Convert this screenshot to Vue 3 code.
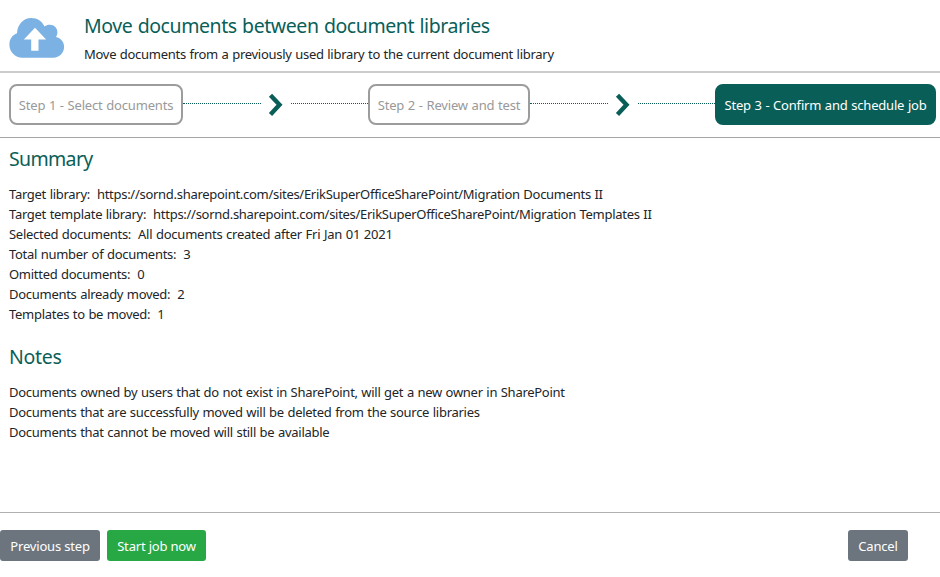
<script setup>
const steps = [
  { label: 'Step 1 - Select documents', cls: 'step-select' },
  { label: 'Step 2 - Review and test', cls: 'step-review' },
  { label: 'Step 3 - Confirm and schedule job', cls: 'step-confirm active' },
]
const summary = [
  { key: 'Target library:', value: 'https://sornd.sharepoint.com/sites/ErikSuperOfficeSharePoint/Migration Documents II', cls: 'url' },
  { key: 'Target template library:', value: 'https://sornd.sharepoint.com/sites/ErikSuperOfficeSharePoint/Migration Templates II', cls: 'url' },
  { key: 'Selected documents:', value: 'All documents created after Fri Jan 01 2021', cls: 'selection' },
  { key: 'Total number of documents:', value: '3', cls: 'total' },
  { key: 'Omitted documents:', value: '0' },
  { key: 'Documents already moved:', value: '2' },
  { key: 'Templates to be moved:', value: '1' },
]
const notes = [
  'Documents owned by users that do not exist in SharePoint, will get a new owner in SharePoint',
  'Documents that are successfully moved will be deleted from the source libraries',
  'Documents that cannot be moved will still be available',
]
</script>

<template>
  <main class="page">
    <header class="header">
      <svg class="cloud" viewBox="0 0 56 42" width="56" height="42">
        <path fill="#7bb1e3" d="M13.500 40.700C6 40.700.400 34.800.400 27.500c0-5.500 3.100-9.500 7.600-11.200C8.500 7 14.500.900 22.300.900c6 0 11 3.400 13.200 8.700 1.500-1.200 3.300-1.800 5.300-1.800 4.400 0 7.600 3.300 7.600 7.400 0 1.700-.5 3.400-1.500 4.800 4.900 1.100 8.200 4.900 8.200 9.800 0 6-4.700 10.900-10.700 10.900z" />
        <path fill="#fff" d="M26 10.800 37.200 22.400h-7.700v11.300H22.200V22.400H14.800z" />
      </svg>
      <div>
        <h1>Move documents between document libraries</h1>
        <p class="subtitle">Move documents from a previously used library to the current document library</p>
      </div>
    </header>
    <nav class="steps">
      <template v-for="(s, i) in steps" :key="s.label">
        <template v-if="i">
          <span class="dots"></span>
          <svg class="chevron" viewBox="0 0 16 24" width="16" height="24">
            <path d="M2.500 2.200 11.500 11.800 2.500 21.400" fill="none" stroke="#0a5e58" stroke-width="4.400" />
          </svg>
          <span class="dots"></span>
        </template>
        <div class="step" :class="s.cls">{{ s.label }}</div>
      </template>
    </nav>
    <section class="content">
      <h2 class="summary-title">Summary</h2>
      <ul>
        <li v-for="row in summary" :key="row.key" :class="row.cls">
          <span>{{ row.key }}</span><span class="value">{{ row.value }}</span>
        </li>
      </ul>
      <h2 class="notes-title">Notes</h2>
      <ul class="notes">
        <li v-for="n in notes" :key="n">{{ n }}</li>
      </ul>
    </section>
    <footer class="footer">
      <button class="btn previous">Previous step</button>
      <button class="btn start">Start job now</button>
      <button class="btn cancel">Cancel</button>
    </footer>
  </main>
</template>

<style>
body { margin: 0; background: #fff; }
</style>

<style scoped>
* { box-sizing: border-box; }
.page { display: flex; flex-direction: column; height: 577px; font: 13px/20px "Noto Sans", sans-serif; letter-spacing: -0.28px; word-spacing: 0.5px; color: #212529; overflow: hidden; }
h1, h2, p, ul { margin: 0; padding: 0; }
ul { list-style: none; }
h1, h2 { font-size: 19.5px; line-height: 24px; font-weight: 400; letter-spacing: -0.42px; word-spacing: 0.7px; color: #0a5e58; }
.header { display: flex; flex: none; gap: 19px; height: 73px; padding: 14px 0 0 9px; border-bottom: 2px solid #cbcecb; }
.cloud { margin-top: 3px; }
.subtitle { margin-top: 6px; }
.steps { display: flex; flex: none; align-items: center; height: 65px; padding: 0 4px 1px 9px; border-bottom: 1px solid #a5a5a5; }
.step { display: flex; align-items: center; justify-content: center; height: 41px; padding-top: 1px; border: 2px solid #9c9c9c; border-radius: 8px; color: #999; white-space: nowrap; letter-spacing: -0.18px; }
.step-select { width: 174px; }
.step-review { width: 162px; }
.step-confirm { width: 221px; letter-spacing: -0.2px; }
.active { background: #0a5e58; border-color: #0a5e58; color: #fff; }
.dots { flex: 1; margin-bottom: 2px; border-top: 1px dotted #0a5e58; }
.chevron { margin: 0 7px; }
.content { flex: 1; min-height: 0; padding: 9px 9px 0; }
.summary-title { letter-spacing: -0.65px; }
.summary-title + ul { margin-top: 13px; }
.notes-title { margin-top: 21px; letter-spacing: -0.3px; }
.notes-title + ul { margin-top: 13px; }
.notes { position: relative; }
.url { letter-spacing: -0.285px; }
.selection .value { letter-spacing: -0.24px; }
.value { margin-left: 7px; }
.footer { display: flex; flex: none; height: 65px; padding: 17px 32px 0 0; border-top: 1px solid #b0b0b0; }
.btn { height: 31px; border: 0; border-radius: 3px; padding: 1px 0 0; font: inherit; letter-spacing: -0.18px; color: #fff; background: #6c757d; }
.previous { width: 100px; }
.start { width: 99px; margin-left: 7px; background: #28a745; }
.cancel { width: 60px; margin-left: auto; }
</style>
